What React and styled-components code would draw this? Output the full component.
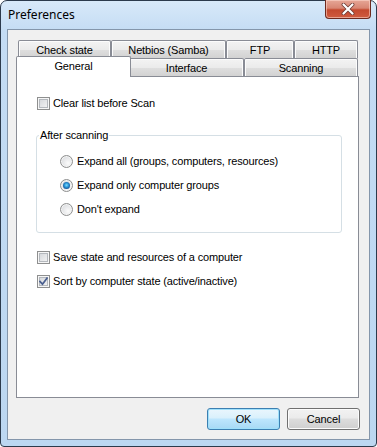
import React from 'react';
import styled, { createGlobalStyle } from 'styled-components';

const GlobalStyle = createGlobalStyle`
  html, body { margin: 0; padding: 0; background: #ffffff; }
  body { font-family: "Liberation Sans", Arial, sans-serif; }
  * { box-sizing: border-box; }
`;

const Window = styled.div`
  width: 377px;
  height: 447px;
  border: 1px solid #2c3a4c;
  border-radius: 7px 7px 4px 4px;
  background: linear-gradient(180deg, #d8e9f9 0px, #c4dcf4 30px, #bcd7f1 100%);
  padding: 0 6px 6px 6px;
  display: flex;
  flex-direction: column;
`;

const TitleBar = styled.div`
  height: 28px;
  display: flex;
  align-items: flex-start;
  justify-content: space-between;
`;

const Title = styled.span`
  margin: 6px 0 0 1px;
  font-family: "Noto Sans", sans-serif;
  font-size: 12px;
  line-height: 16px;
  color: #000;
`;

const CloseButton = styled.div`
  width: 46px;
  height: 19px;
  margin: -1px -1px 0 0;
  border: 1px solid #6e2a1f;
  border-top: none;
  border-radius: 0 0 4px 4px;
  background: linear-gradient(180deg, #e6a797 0%, #d88673 45%, #c4492f 55%, #cf5c40 100%);
  box-shadow: inset 0 0 0 1px rgba(255, 220, 210, 0.55);
  display: flex;
  align-items: center;
  justify-content: center;
`;

const Client = styled.div`
  flex: 1;
  border: 1px solid #8496ab;
  background: #f0f0f0;
  display: flex;
  flex-direction: column;
  padding: 10px 10px 9px 8px;
`;

const TabControl = styled.div`
  flex: 1;
  display: flex;
  flex-direction: column;
`;

const TabRow = styled.div`
  display: flex;
  align-items: flex-end;
  height: 18px;
  padding: 0 1px 0 2px;
`;

const Tab = styled.div`
  width: ${(p) => p.$w + (p.$selected ? 4 : 0)}px;
  height: ${(p) => (p.$selected ? 21 : 18)}px;
  margin: ${(p) => (p.$selected ? '0 -2px -1px -2px' : '0')};
  border: 1px solid #898c95;
  border-bottom: none;
  border-radius: 2px 2px 0 0;
  background: ${(p) =>
    p.$selected
      ? '#ffffff'
      : 'linear-gradient(180deg, #f3f3f3 0%, #ebebeb 50%, #dedede 55%, #d2d2d2 100%)'};
  box-shadow: ${(p) => (p.$selected ? 'none' : 'inset 1px 1px 0 #fcfcfc, inset -1px 0 0 #fcfcfc')};
  position: relative;
  z-index: ${(p) => (p.$selected ? 1 : 0)};
  display: flex;
  align-items: center;
  justify-content: center;
  padding-bottom: ${(p) => (p.$selected ? 2 : 0)}px;
  font-size: 11px;
  letter-spacing: -0.15px;
  color: #000;
  white-space: nowrap;
`;

const Panel = styled.div`
  flex: 1;
  border: 1px solid #898c95;
  background: #ffffff;
  padding: 20px 0 0 20px;
  display: flex;
  flex-direction: column;
`;

const OptionRow = styled.label`
  display: flex;
  align-items: center;
  gap: ${(p) => p.$gap || 3}px;
  height: 13px;
  margin-top: ${(p) => p.$mt || 0}px;
  font-size: 11px;
  letter-spacing: -0.15px;
  line-height: 13px;
  color: #000;
  white-space: nowrap;
`;

const CheckBox = styled.span`
  width: 13px;
  height: 13px;
  flex: none;
  border: 1px solid #8e8f8f;
  background: linear-gradient(135deg, #cfd2d6 0%, #e6e7e9 55%, #f7f7f7 100%);
  box-shadow: inset 0 0 0 1px #f6f6f6, inset 0 0 0 2px #b4b8bd;
  display: flex;
  align-items: center;
  justify-content: center;
`;

const Radio = styled.span`
  width: 13px;
  height: 13px;
  flex: none;
  border-radius: 50%;
  border: 1px solid #8e8f8f;
  background: radial-gradient(circle at 65% 65%, #fbfbfb 0%, #e6e7e9 50%, #cfd2d6 100%);
  box-shadow: inset 0 0 0 1px #f4f4f4;
  display: flex;
  align-items: center;
  justify-content: center;
`;

const RadioDot = styled.span`
  width: 7px;
  height: 7px;
  border-radius: 50%;
  background: radial-gradient(circle at 50% 45%, #7fdcff 0%, #2a95d6 40%, #144f95 75%, #0c2f66 100%);
`;

const Group = styled.fieldset`
  width: 306px;
  margin: 19px 0 0 -1px;
  padding: 0;
  border: 1px solid #d5dfe5;
  border-radius: 3px;
  min-width: 0;
`;

const Legend = styled.legend`
  margin-left: 2px;
  padding: 0 1px;
  font-size: 11px;
  letter-spacing: -0.15px;
  line-height: 13px;
  color: #000;
`;

const GroupBody = styled.div`
  display: flex;
  flex-direction: column;
  gap: 11px;
  padding: 13px 0 16px 23px;
`;

const ButtonRow = styled.div`
  display: flex;
  justify-content: flex-end;
  gap: 7px;
  margin: 10px -1px 0 0;
`;

const Button = styled.div`
  width: 73px;
  height: 22px;
  border: 1px solid ${(p) => (p.$default ? '#3c7fb1' : '#707070')};
  border-radius: 3px;
  background: ${(p) =>
    p.$default
      ? 'linear-gradient(180deg, #eaf6fd 0%, #d9f0fc 45%, #bee6fd 50%, #a7d9f5 100%)'
      : 'linear-gradient(180deg, #f2f2f2 0%, #ebebeb 45%, #dddddd 50%, #cfcfcf 100%)'};
  box-shadow: ${(p) =>
    p.$default ? 'inset 0 0 0 1px #9fe0fb' : 'inset 0 0 0 1px #fcfcfc'};
  display: flex;
  align-items: center;
  justify-content: center;
  font-size: 11px;
  letter-spacing: -0.15px;
  color: #000;
`;

const CheckMark = () => (
  <svg width="9" height="9" viewBox="0 0 9 9">
    <path d="M1 4.5 L3.5 7.2 L8 1.2" fill="none" stroke="#4a5f8f" strokeWidth="1.8" strokeLinecap="square" />
  </svg>
);

const CloseGlyph = () => (
  <svg width="14" height="12" viewBox="0 0 14 12">
    <path d="M2.5 1.5 L11.5 10.5 M11.5 1.5 L2.5 10.5" stroke="#6b3a33" strokeWidth="3.8" strokeLinecap="round" />
    <path d="M2.5 1.5 L11.5 10.5 M11.5 1.5 L2.5 10.5" stroke="#ffffff" strokeWidth="2.2" strokeLinecap="round" />
  </svg>
);

const Check = ({ checked, label, mt }) => (
  <OptionRow $mt={mt}>
    <CheckBox>{checked && <CheckMark />}</CheckBox>
    <span>{label}</span>
  </OptionRow>
);

const RadioOption = ({ checked, label }) => (
  <OptionRow $gap={4}>
    <Radio>{checked && <RadioDot />}</Radio>
    <span>{label}</span>
  </OptionRow>
);

const topTabs = [
  { label: 'Check state', w: 93 },
  { label: 'Netbios (Samba)', w: 115 },
  { label: 'FTP', w: 68 },
  { label: 'HTTP', w: 64 },
];

const bottomTabs = [
  { label: 'General', w: 111, selected: true },
  { label: 'Interface', w: 115 },
  { label: 'Scanning', w: 114 },
];

export default function App() {
  return (
    <>
      <GlobalStyle />
      <Window>
        <TitleBar>
          <Title>Preferences</Title>
          <CloseButton>
            <CloseGlyph />
          </CloseButton>
        </TitleBar>
        <Client>
          <TabControl>
            <TabRow>
              {topTabs.map((t) => (
                <Tab key={t.label} $w={t.w}>
                  {t.label}
                </Tab>
              ))}
            </TabRow>
            <TabRow>
              {bottomTabs.map((t) => (
                <Tab key={t.label} $w={t.w} $selected={t.selected}>
                  {t.label}
                </Tab>
              ))}
            </TabRow>
            <Panel>
              <Check label="Clear list before Scan" />
              <Group>
                <Legend>After scanning</Legend>
                <GroupBody>
                  <RadioOption label="Expand all (groups, computers, resources)" />
                  <RadioOption checked label="Expand only computer groups" />
                  <RadioOption label="Don't expand" />
                </GroupBody>
              </Group>
              <Check mt={18} label="Save state and resources of a computer" />
              <Check mt={11} checked label="Sort by computer state (active/inactive)" />
            </Panel>
          </TabControl>
          <ButtonRow>
            <Button $default>OK</Button>
            <Button>Cancel</Button>
          </ButtonRow>
        </Client>
      </Window>
    </>
  );
}
